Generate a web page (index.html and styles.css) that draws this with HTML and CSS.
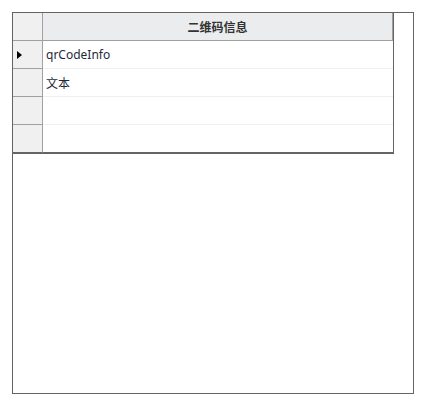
FILE: index.html
```html
<!DOCTYPE html>
<html>
<head>
<meta charset="utf-8">
<link rel="stylesheet" href="styles.css">
</head>
<body>
<div class="panel">
  <div class="grid">
    <div class="corner"></div>
    <div class="colhead">二维码信息</div>

    <div class="rowhead"><span class="arrow"></span></div>
    <div class="cell">qrCodeInfo</div>

    <div class="rowhead"></div>
    <div class="cell">文本</div>

    <div class="rowhead"></div>
    <div class="cell"></div>

    <div class="rowhead last"></div>
    <div class="cell last"></div>
  </div>
</div>
</body>
</html>
```
FILE: styles.css
```css
html, body {
  margin: 0;
  padding: 0;
  background: #ffffff;
}
body {
  padding: 12px;
  font-family: "Noto Sans", "Noto Sans CJK SC", sans-serif;
  font-size: 12px;
  color: #222;
}
.panel {
  width: 400px;
  height: 380px;
  border: 1px solid #646464;
}
.grid {
  display: grid;
  grid-template-columns: 30px 350px;
  grid-auto-rows: 28px;
  width: 380px;
  border-right: 1px solid #646464;
  border-bottom: 1px solid #646464;
}
.corner {
  background: #f0f0f0;
  border-right: 1px solid #a0a0a0;
  border-bottom: 1px solid #a0a0a0;
}
.colhead {
  background: #ebecee;
  border-right: 1px solid #a0a0a0;
  border-bottom: 1px solid #a0a0a0;
  display: flex;
  align-items: center;
  justify-content: center;
  font-family: "Noto Sans CJK SC", sans-serif;
  font-weight: 700;
  color: #333;
  font-size: 12px;
}
.rowhead {
  background: #f0f0f0;
  border-right: 1px solid #a0a0a0;
  border-bottom: 1px solid #a0a0a0;
  display: flex;
  align-items: center;
  padding-left: 4px;
}
.cell {
  border-bottom: 1px solid #f0f0f0;
  display: flex;
  align-items: center;
  padding-left: 3px;
  color: #1e2a3a;
}
.rowhead.last,
.cell.last {
  border-bottom-color: #646464;
}
.arrow {
  width: 0;
  height: 0;
  border-top: 4px solid transparent;
  border-bottom: 4px solid transparent;
  border-left: 5px solid #000;
}
```
